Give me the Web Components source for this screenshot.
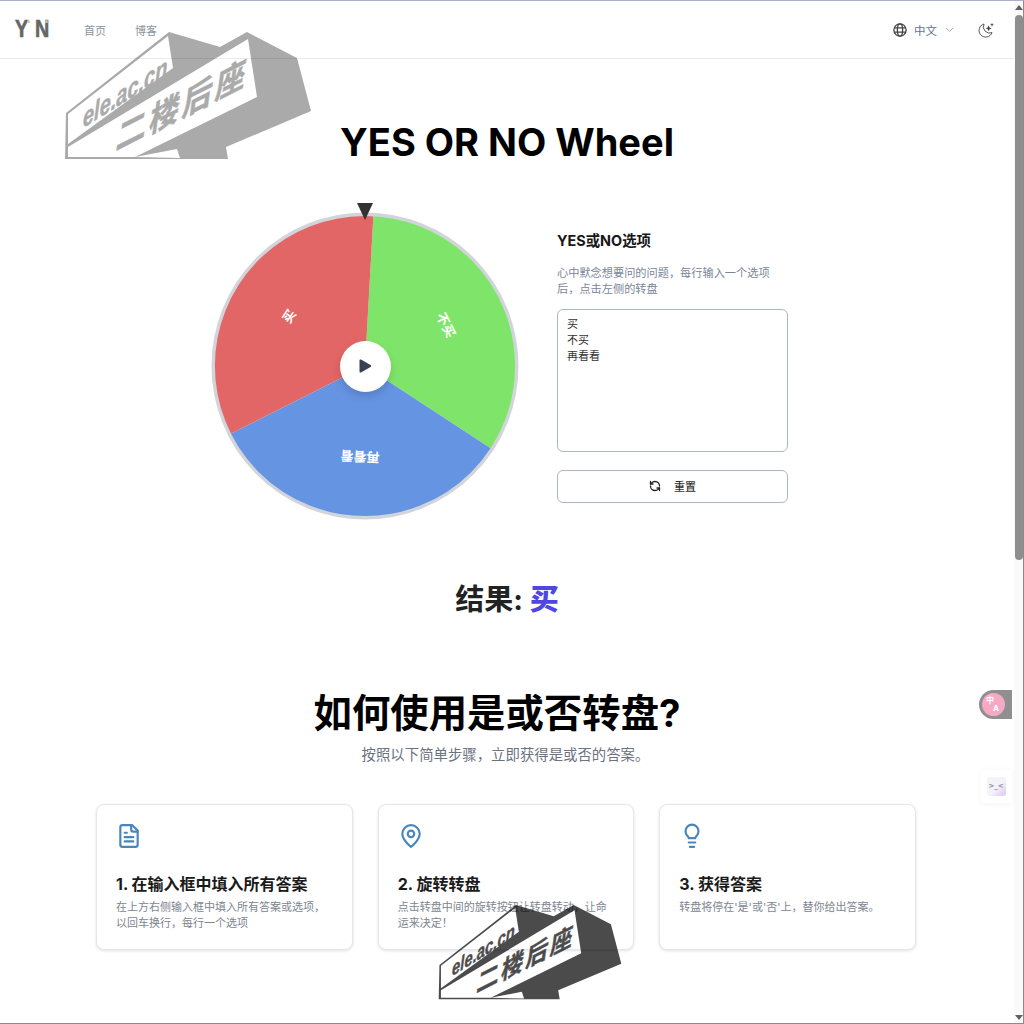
<!DOCTYPE html>
<html lang="zh">
<head>
<meta charset="utf-8">
<title>YES OR NO Wheel</title>
<style>
  html, body { margin: 0; height: 1024px; overflow: hidden; background: #fff; }
  body { font-family: Inter, "Noto Sans CJK SC", sans-serif; color: #111; }
  app-shell { height: 1024px; }
</style>
</head>
<body>
<app-shell>
  <site-header></site-header>
  <h-title></h-title>
  <wheel-section></wheel-section>
  <result-line>买</result-line>
  <how-to></how-to>
  <float-widgets slot="over"></float-widgets>
  <stamp-mark slot="over" style="left:65px;top:31px;width:246px;height:128px;opacity:.33"></stamp-mark>
  <stamp-mark slot="over" style="left:438px;top:904px;width:184px;height:95px;opacity:.7"></stamp-mark>
</app-shell>

<script>
const FONT = 'Inter, "Noto Sans CJK SC", sans-serif';

function define(name, html) {
  customElements.define(name, class extends HTMLElement {
    constructor() {
      super();
      this.attachShadow({ mode: 'open' }).innerHTML = html;
    }
  });
}

define('app-shell', `
  <style>
    :host { display: flex; position: relative; border-top: 1px solid #a9aeca; border-bottom: 1px solid #8a8a8a; border-right: 1px solid #8a8a8a; box-sizing: border-box; overflow: hidden; }
    .page { flex: 1; min-width: 0; display: flex; flex-direction: column; }
    .bar { width: 9px; background: #fafafa; display: flex; flex-direction: column; align-items: center; }
    .arrow { width: 0; height: 0; margin: 4px 0 5px; border: 4px solid transparent; border-top: 0; border-bottom: 5px solid #606060; }
    .arrow.down { margin: auto 0 3px; border-bottom: 0; border-top: 5px solid #606060; }
    .thumb { width: 8px; height: 545px; background: #8e8e8e; border-radius: 4px; }
    .over { position: absolute; inset: 0; pointer-events: none; }
  </style>
  <div class="page"><slot></slot></div>
  <div class="bar"><div class="arrow"></div><div class="thumb"></div><div class="arrow down"></div></div>
  <div class="over"><slot name="over"></slot></div>
`);

define('site-header', `
  <style>
    :host { display: flex; align-items: center; height: 57px; border-bottom: 1px solid #e9ecef; padding: 0 20px 0 15px; font-size: 11px; color: #8a939e; }
    .logo { position: relative; display: flex; gap: 7px; width: 69px; font: 700 23px/23px "Liberation Sans", sans-serif; color: #666; -webkit-text-stroke: .6px #666; }
    .logo span { display: block; width: 13px; transform: scaleX(.86); transform-origin: left; }
    .logo i { position: absolute; width: 3px; height: 3px; border-radius: 50%; background: #bccaa8; top: 2px; }
    nav { display: flex; gap: 29px; }
    .spacer { flex: 1; }
    .lang { display: flex; align-items: center; gap: 7px; color: #64748b; font-size: 11.500px; }
    .chev { margin-left: 1px; }
    .moon { margin-left: 24px; }
    svg { display: block; }
  </style>
  <div class="logo"><span>Y</span><span>N</span><i style="left:12px"></i><i style="left:30px"></i></div>
  <nav><span>首页</span><span>博客</span></nav>
  <div class="spacer"></div>
  <div class="lang">
    <svg width="14" height="14" viewBox="0 0 24 24" fill="none" stroke="#444" stroke-width="2.200"><circle cx="12" cy="12" r="10.500"/><ellipse cx="12" cy="12" rx="4.500" ry="10.500"/><path d="M2 8.500h20M2 15.500h20"/></svg>
    <span>中文</span>
    <svg class="chev" width="9" height="6" viewBox="0 0 9 6" fill="none" stroke="#aab" stroke-width="1"><path d="M1 1l3.500 3.500L8 1"/></svg>
  </div>
  <svg class="moon" width="16" height="16" viewBox="0 0 24 24" fill="none" stroke="#555" stroke-width="1.500" stroke-linejoin="round"><path d="M9 3a10 10 0 1 0 12 13A9.500 9.500 0 0 1 9 3z"/><path d="M16 5l1.300 3.200L20.500 9.500l-3.200 1.300L16 14l-1.300-3.200L11.500 9.500l3.200-1.300z" fill="#444" stroke="none"/><path d="M21 1l.8 2.200L24 4l-2.200.8L21 7l-.8-2.200L18 4l2.200-.8z" fill="#444" stroke="none"/></svg>
`);

define('h-title', `
  <style>
    :host { display: block; text-align: center; margin-top: 61px; }
    h1 { margin: 0; font-size: 38px; line-height: 44px; font-weight: 700; color: #000; }
  </style>
  <h1>YES OR NO Wheel</h1>
`);

define('spin-wheel', `
  <style>
    :host { display: block; position: relative; width: 306px; height: 306px; flex: none; }
    svg.disc { display: block; overflow: visible; }
    text { font: 700 13px ${FONT}; fill: #fff; text-anchor: middle; dominant-baseline: central; }
    .pointer { position: absolute; left: 145px; top: -10px; width: 0; height: 0; border-left: 8px solid transparent; border-right: 8px solid transparent; border-top: 17px solid #333; }
    .play { position: absolute; left: 127.500px; top: 127.500px; width: 51px; height: 51px; border-radius: 50%; background: #fff; box-shadow: 0 4px 8px rgba(0,0,0,.15); display: flex; align-items: center; justify-content: center; }
  </style>
  <svg class="disc" width="306" height="306" viewBox="-153 -153 306 306">
    <g id="slices"></g>
    <circle r="151.800" fill="none" stroke="#d1d5db" stroke-width="3.400"/>
    <g id="labels"></g>
  </svg>
  <div class="pointer"></div>
  <div class="play">
    <svg width="16" height="16" viewBox="0 0 16 16"><path d="M2.500 2.500a1 1 0 0 1 1.500-.9l9.500 5.500a1 1 0 0 1 0 1.800L4 14.400a1 1 0 0 1-1.500-.9z" fill="#374151"/></svg>
  </div>
`);

const wheelOptions = [
  { label: '不买', color: '#7fe56a' },
  { label: '再看看', color: '#6594e3' },
  { label: '买', color: '#e26666' }
];

customElements.whenDefined('spin-wheel').then(() => {
  document.querySelector('wheel-section').shadowRoot.querySelectorAll('spin-wheel').forEach(drawWheel);
});

function drawWheel(el) {
  const ns = 'http://www.w3.org/2000/svg';
  const slices = el.shadowRoot.getElementById('slices');
  const labels = el.shadowRoot.getElementById('labels');
  const start = 3.2;
  const sweep = 360 / wheelOptions.length;
  const pt = (deg, r) => {
    const a = (deg - 90) * Math.PI / 180;
    return [(r * Math.cos(a)).toFixed(2), (r * Math.sin(a)).toFixed(2)];
  };
  wheelOptions.forEach((opt, i) => {
    const a0 = start + i * sweep;
    const [x0, y0] = pt(a0, 151);
    const [x1, y1] = pt(a0 + sweep, 151);
    const path = document.createElementNS(ns, 'path');
    path.setAttribute('d', `M0 0L${x0} ${y0}A151 151 0 0 1 ${x1} ${y1}Z`);
    path.setAttribute('fill', opt.color);
    slices.appendChild(path);

    const mid = a0 + sweep / 2;
    const [tx, ty] = pt(mid, 91);
    const text = document.createElementNS(ns, 'text');
    text.setAttribute('transform', `translate(${tx} ${ty}) rotate(${mid})`);
    text.textContent = opt.label;
    labels.appendChild(text);
  });
}

define('option-panel', `
  <style>
    :host { display: flex; flex-direction: column; width: 231px; font-size: 11px; }
    h3 { margin: 0; font-size: 14.400px; line-height: 20px; font-weight: 700; color: #171717; }
    p { margin: 14px 0 0; line-height: 16px; color: #7a8698; font-size: 11.200px; }
    .box { margin-top: 12px; height: 143px; box-sizing: border-box; padding: 6px 9px; border: 1px solid #a9b8c9; border-radius: 6px; white-space: pre-line; line-height: 16px; color: #333; }
    .reset { margin-top: 18px; height: 33px; box-sizing: border-box; border: 1px solid #a9b8c9; border-radius: 6px; display: flex; align-items: center; justify-content: center; gap: 13px; font-weight: 500; color: #333; padding-bottom: 2px; }
    svg { display: block; }
  </style>
  <h3>YES或NO选项</h3>
  <p>心中默念想要问的问题，每行输入一个选项后，点击左侧的转盘</p>
  <div class="box">买
不买
再看看</div>
  <div class="reset">
    <svg width="12" height="12" viewBox="0 0 24 24" fill="none" stroke="#222" stroke-width="2.600" stroke-linecap="round" stroke-linejoin="round"><path d="M21 12a9 9 0 0 0-9-9 9.750 9.750 0 0 0-6.740 2.740L3 8"/><path d="M3 3v5h5"/><path d="M3 12a9 9 0 0 0 9 9 9.750 9.750 0 0 0 6.740-2.740L21 16"/><path d="M16 16h5v5"/></svg>
    <span>重置</span>
  </div>
`);

define('wheel-section', `
  <style>
    :host { display: flex; justify-content: flex-start; align-items: flex-start; gap: 39px; padding-left: 212px; margin-top: 49px; height: 325px; }
    option-panel { margin-top: 18px; }
  </style>
  <spin-wheel></spin-wheel>
  <option-panel></option-panel>
`);

define('result-line', `
  <style>
    :host { display: block; text-align: center; font-size: 29px; line-height: 36px; font-weight: 700; color: #222; margin-top: 44px; }
    b { color: #4f46e5; }
  </style>
  结果: <b><slot></slot></b>
`);

define('step-card', `
  <style>
    :host { display: block; box-sizing: border-box; height: 146px; padding: 18px 19px 0; background: #fff; border: 1px solid #e5e7eb; border-radius: 8px; box-shadow: 0 1px 3px rgba(0,0,0,.12); }
    .icon { height: 26px; color: #4a86bb; }
    h4 { margin: 23px 0 0; font-size: 16px; line-height: 24px; font-weight: 700; color: #1a1a1a; }
    p { margin: 3px 0 0; font-size: 11px; line-height: 16px; color: #7d8590; }
  </style>
  <div class="icon"><slot name="icon"></slot></div>
  <h4><slot name="title"></slot></h4>
  <p><slot></slot></p>
`);

define('how-to', `
  <style>
    :host { display: block; margin-top: 72px; text-align: center; }
    h2 { margin: 0; padding-right: 20px; font-size: 38.400px; line-height: 46px; font-weight: 700; color: #000; }
    .sub { margin: 9px 0 0; padding-right: 3px; font-size: 14.400px; line-height: 20px; color: #6b7280; }
    .grid { display: grid; grid-template-columns: repeat(3, 256.670px); gap: 25px; justify-content: start; margin: 39px 0 0 96px; text-align: left; }
    svg { display: block; }
  </style>
  <h2>如何使用是或否转盘?</h2>
  <p class="sub">按照以下简单步骤，立即获得是或否的答案。</p>
  <div class="grid">
    <step-card>
      <svg slot="icon" width="26" height="26" viewBox="0 0 24 24" fill="none" stroke="currentColor" stroke-width="2" stroke-linecap="round" stroke-linejoin="round"><path d="M15 2H6a2 2 0 0 0-2 2v16a2 2 0 0 0 2 2h12a2 2 0 0 0 2-2V7z"/><path d="M14 2v4a2 2 0 0 0 2 2h4"/><path d="M10 9H8M16 13H8M16 17H8"/></svg>
      <span slot="title">1. 在输入框中填入所有答案</span>
      在上方右侧输入框中填入所有答案或选项，以回车换行，每行一个选项
    </step-card>
    <step-card>
      <svg slot="icon" width="26" height="26" viewBox="0 0 24 24" fill="none" stroke="currentColor" stroke-width="2" stroke-linecap="round" stroke-linejoin="round"><path d="M20 10c0 6-8 12-8 12s-8-6-8-12a8 8 0 0 1 16 0z"/><circle cx="12" cy="10" r="3"/></svg>
      <span slot="title">2. 旋转转盘</span>
      点击转盘中间的旋转按钮让转盘转动，让命运来决定！
    </step-card>
    <step-card>
      <svg slot="icon" width="26" height="26" viewBox="0 0 24 24" fill="none" stroke="currentColor" stroke-width="2" stroke-linecap="round" stroke-linejoin="round"><path d="M9 18h6M10 22h4"/><path d="M15 14c.2-1 .7-1.700 1.500-2.500A6 6 0 1 0 7.500 11.500c.8.800 1.300 1.500 1.500 2.500z"/></svg>
      <span slot="title">3. 获得答案</span>
      转盘将停在'是'或'否'上，替你给出答案。
    </step-card>
  </div>
`);

define('float-widgets', `
  <style>
    :host { display: block; position: absolute; inset: 0; }
    .pill { position: absolute; left: 979px; top: 689px; width: 33px; height: 29px; background: #8f8f8f; border-radius: 15px 0 0 15px; display: flex; align-items: center; padding-left: 3px; box-sizing: border-box; }
    .pill div { position: relative; width: 23px; height: 23px; border-radius: 50%; background: #f6a9c4; color: #fff; font: 700 8px/9px ${FONT}; }
    .pill span { position: absolute; }
    .tile { position: absolute; left: 980px; top: 769px; width: 32px; height: 33px; background: #fff; border-radius: 6px 0 0 6px; box-shadow: 0 1px 6px rgba(0,0,0,.05); display: flex; align-items: center; justify-content: center; }
    .tile span { width: 19px; height: 19px; border-radius: 3px; background: linear-gradient(135deg, #f4f3fa 55%, #d9c6f2); color: #8a8a99; font: 700 7px/19px "DejaVu Sans", sans-serif; text-align: center; }
  </style>
  <div class="pill"><div><span style="left:4px;top:3px">中</span><span style="left:11px;top:11px">A</span></div></div>
  <div class="tile"><span>&gt;_&lt;</span></div>
`);

// grey block with the lettered faces cut out of it
define('stamp-mark', `
  <style>
    :host { display: block; position: absolute; color: #000; }
    svg { display: block; width: 100%; height: 100%; overflow: visible; }
    text { fill: currentColor; stroke: currentColor; stroke-width: .6; font-weight: 700; }
    .top { font-family: "Liberation Sans", sans-serif; font-style: italic; font-size: 27px; }
    .cn { font-family: "Noto Sans CJK SC", sans-serif; font-size: 30px; letter-spacing: 3px; }
  </style>
  <svg viewBox="0 0 246 128">
    <path fill="currentColor" fill-rule="evenodd" d="M104 0L155 15L182 0L232 26L246 79L161 115L163 127L0 127L1 81Z
      M3 82L103 4L108 36L3 112Z
      M3 115L183 7L192 65L70 125L3 125Z
      M70 125L112 117L115 126Z"/>
    <text class="top" transform="translate(18 96) skewY(-32) scale(.74 1)">ele.ac.cn</text>
    <text class="cn" transform="translate(50 119) skewY(-27) skewX(-8) scale(1 1.1)">二楼后座</text>
  </svg>
`);
</script>
</body>
</html>
